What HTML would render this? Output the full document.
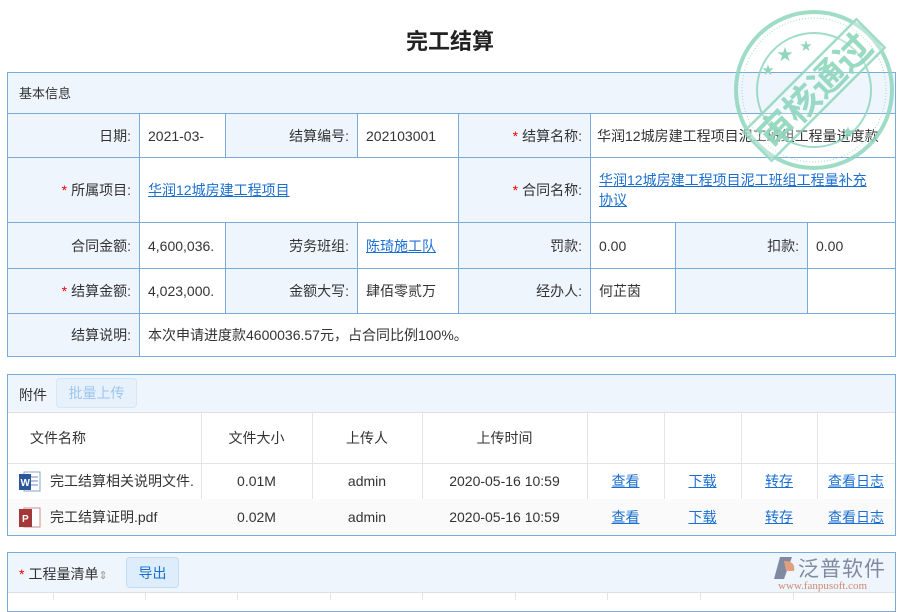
<!DOCTYPE html>
<html><head><meta charset="utf-8"><style>
*{margin:0;padding:0;box-sizing:border-box}
body{width:900px;height:600px;overflow:hidden;background:#fff;font-family:"Liberation Sans","Noto Sans CJK SC",sans-serif;font-size:14px;color:#333;position:relative}
.a{position:absolute}
.c{position:absolute;border:1px solid #7aaad8;display:flex;align-items:center;padding:0 8px}
.l{background:#eef5fd;justify-content:flex-end}
.v{background:#fff}
.r{color:#e00;margin-right:4px}
a{color:#1a6fd1;text-decoration:underline}
.g{position:absolute;border-right:1px solid #e4e4e4;border-bottom:1px solid #e4e4e4;display:flex;align-items:center;justify-content:center}
</style></head><body>
<div class="a" style="left:0;top:24px;width:900px;text-align:center;font-size:22px;font-weight:bold;color:#222">完工结算</div>

<div class="a" style="left:7px;top:72px;width:889px;height:285px;border:1px solid #7aaad8;background:#eef5fd"></div>
<div class="a" style="left:19px;top:83px;font-size:13px">基本信息</div>
<div class="c l" style="left:7px;top:113px;width:133px;height:45px">日期:</div>
<div class="c v" style="left:139px;top:113px;width:87px;height:45px">2021-03-</div>
<div class="c l" style="left:225px;top:113px;width:133px;height:45px">结算编号:</div>
<div class="c v" style="left:357px;top:113px;width:102px;height:45px">202103001</div>
<div class="c l" style="left:458px;top:113px;width:133px;height:45px"><span class="r">*</span>结算名称:</div>
<div class="c v" style="left:590px;top:113px;width:306px;height:45px;white-space:nowrap;padding-left:6px">华润12城房建工程项目泥工班组工程量进度款</div>
<div class="c l" style="left:7px;top:157px;width:133px;height:66px"><span class="r">*</span>所属项目:</div>
<div class="c v" style="left:139px;top:157px;width:320px;height:66px"><a>华润12城房建工程项目</a></div>
<div class="c l" style="left:458px;top:157px;width:133px;height:66px"><span class="r">*</span>合同名称:</div>
<div class="c v" style="left:590px;top:157px;width:306px;height:66px;line-height:20px;padding-right:20px"><a>华润12城房建工程项目泥工班组工程量补充协议</a></div>
<div class="c l" style="left:7px;top:222px;width:133px;height:47px">合同金额:</div>
<div class="c v" style="left:139px;top:222px;width:87px;height:47px">4,600,036.</div>
<div class="c l" style="left:225px;top:222px;width:133px;height:47px">劳务班组:</div>
<div class="c v" style="left:357px;top:222px;width:102px;height:47px"><a>陈琦施工队</a></div>
<div class="c l" style="left:458px;top:222px;width:133px;height:47px">罚款:</div>
<div class="c v" style="left:590px;top:222px;width:86px;height:47px">0.00</div>
<div class="c l" style="left:675px;top:222px;width:133px;height:47px">扣款:</div>
<div class="c v" style="left:807px;top:222px;width:89px;height:47px">0.00</div>
<div class="c l" style="left:7px;top:268px;width:133px;height:46px"><span class="r">*</span>结算金额:</div>
<div class="c v" style="left:139px;top:268px;width:87px;height:46px">4,023,000.</div>
<div class="c l" style="left:225px;top:268px;width:133px;height:46px">金额大写:</div>
<div class="c v" style="left:357px;top:268px;width:102px;height:46px">肆佰零贰万</div>
<div class="c l" style="left:458px;top:268px;width:133px;height:46px">经办人:</div>
<div class="c v" style="left:590px;top:268px;width:86px;height:46px">何芷茵</div>
<div class="c l" style="left:675px;top:268px;width:133px;height:46px"></div>
<div class="c v" style="left:807px;top:268px;width:89px;height:46px"></div>
<div class="c l" style="left:7px;top:313px;width:133px;height:44px">结算说明:</div>
<div class="c v" style="left:139px;top:313px;width:757px;height:44px">本次申请进度款4600036.57元，占合同比例100%。</div>

<svg class="a" style="left:732px;top:8px" width="164" height="164" viewBox="0 0 164 164">
<g fill="none" stroke="#8fd6bd" opacity="0.85">
<circle cx="82" cy="82" r="78" stroke-width="4"/>
<circle cx="82" cy="82" r="72" stroke-width="1" stroke-dasharray="1 2"/>
<circle cx="82" cy="82" r="57" stroke-width="2"/>
<g transform="rotate(-45 82 82)"><rect x="2" y="62" width="160" height="40" fill="#fff" fill-opacity="0.3" stroke-width="2.5"/></g>
</g>
<g fill="#8fd6bd" font-size="12"><text x="30" y="66">★</text><text x="45" y="52" font-size="16">★</text><text x="68" y="42">★</text><text x="110" y="128">★</text></g>
<text x="82" y="96" text-anchor="middle" font-size="36" font-weight="bold" fill="#8fd6bd" opacity="0.9" transform="rotate(-45 82 82)" font-family="Noto Sans CJK SC,sans-serif">审核通过</text>
</svg>

<div class="a" style="left:7px;top:374px;width:889px;height:162px;border:1px solid #7aaad8;background:#fff"></div>
<div class="a" style="left:8px;top:375px;width:887px;height:38px;background:#eef5fd;border-bottom:1px solid #e0e0e0"></div>
<div class="a" style="left:19px;top:385px">附件</div>
<div class="a" style="left:56px;top:378px;width:81px;height:30px;border:1px solid #d5e6f5;border-radius:4px;background:#e6f1fc;color:#9cc5ef;display:flex;align-items:center;justify-content:center">批量上传</div>
<div class="g" style="left:8px;top:413px;width:194px;height:51px;justify-content:flex-start;padding-left:22px">文件名称</div>
<div class="g" style="left:201px;top:413px;width:112px;height:51px">文件大小</div>
<div class="g" style="left:312px;top:413px;width:111px;height:51px">上传人</div>
<div class="g" style="left:422px;top:413px;width:166px;height:51px">上传时间</div>
<div class="g" style="left:587px;top:413px;width:78px;height:51px"></div>
<div class="g" style="left:664px;top:413px;width:78px;height:51px"></div>
<div class="g" style="left:741px;top:413px;width:77px;height:51px"></div>
<div class="g" style="left:817px;top:413px;width:78px;height:51px;border-right:none"></div>

<div class="g" style="left:8px;top:463px;width:194px;height:37px;justify-content:flex-start;padding-left:10px;white-space:nowrap;overflow:hidden"><svg width="24" height="24" style="margin-right:8px;flex:none"><rect x="6" y="3" width="16" height="19" fill="#fff" stroke="#8aa0c8"/><line x1="12" y1="8" x2="20" y2="8" stroke="#6a8ac0"/><line x1="12" y1="12" x2="20" y2="12" stroke="#6a8ac0"/><line x1="12" y1="16" x2="20" y2="16" stroke="#6a8ac0"/><rect x="1" y="5" width="12" height="16" fill="#2b579a"/><text x="2.5" y="17" font-size="10" fill="#fff" font-weight="bold">W</text></svg>完工结算相关说明文件.</div>
<div class="g" style="left:201px;top:463px;width:112px;height:37px">0.01M</div>
<div class="g" style="left:312px;top:463px;width:111px;height:37px">admin</div>
<div class="g" style="left:422px;top:463px;width:166px;height:37px">2020-05-16 10:59</div>
<div class="g" style="left:587px;top:463px;width:78px;height:37px"><a>查看</a></div>
<div class="g" style="left:664px;top:463px;width:78px;height:37px"><a>下载</a></div>
<div class="g" style="left:741px;top:463px;width:77px;height:37px"><a>转存</a></div>
<div class="g" style="left:817px;top:463px;width:78px;height:37px;border-right:none"><a>查看日志</a></div>

<div class="g" style="left:8px;top:499px;width:194px;height:36px;background:#fafafa;justify-content:flex-start;padding-left:10px;border-bottom:none"><svg width="24" height="24" style="margin-right:8px"><rect x="6" y="3" width="16" height="19" fill="#fff" stroke="#c89090"/><rect x="1" y="4" width="13" height="18" fill="#a4373a"/><text x="4" y="17" font-size="10" fill="#fff" font-weight="bold">P</text></svg>完工结算证明.pdf</div>
<div class="g" style="left:201px;top:499px;width:112px;height:36px;background:#fafafa;border-bottom:none">0.02M</div>
<div class="g" style="left:312px;top:499px;width:111px;height:36px;background:#fafafa;border-bottom:none">admin</div>
<div class="g" style="left:422px;top:499px;width:166px;height:36px;background:#fafafa;border-bottom:none">2020-05-16 10:59</div>
<div class="g" style="left:587px;top:499px;width:78px;height:36px;background:#fafafa;border-bottom:none"><a>查看</a></div>
<div class="g" style="left:664px;top:499px;width:78px;height:36px;background:#fafafa;border-bottom:none"><a>下载</a></div>
<div class="g" style="left:741px;top:499px;width:77px;height:36px;background:#fafafa;border-bottom:none"><a>转存</a></div>
<div class="g" style="left:817px;top:499px;width:78px;height:36px;background:#fafafa;border:none"><a>查看日志</a></div>

<div class="a" style="left:7px;top:552px;width:889px;height:60px;border:1px solid #7aaad8;background:#fff"></div>
<div class="a" style="left:8px;top:553px;width:887px;height:40px;background:#eef5fd;border-bottom:1px solid #e0e0e0"></div>
<div class="a" style="left:19px;top:564px"><span class="r">*</span>工程量清单<span style="color:#999;font-size:11px">⇕</span></div>
<div class="a" style="left:126px;top:557px;width:53px;height:31px;border:1px solid #c5dbf0;border-radius:4px;background:#deedfb;color:#1a6fd1;display:flex;align-items:center;justify-content:center">导出</div>
<div class="a" style="left:53px;top:593px;width:1px;height:7px;background:#e4e4e4"></div>
<div class="a" style="left:145px;top:593px;width:1px;height:7px;background:#e4e4e4"></div>
<div class="a" style="left:237px;top:593px;width:1px;height:7px;background:#e4e4e4"></div>
<div class="a" style="left:330px;top:593px;width:1px;height:7px;background:#e4e4e4"></div>
<div class="a" style="left:422px;top:593px;width:1px;height:7px;background:#e4e4e4"></div>
<div class="a" style="left:515px;top:593px;width:1px;height:7px;background:#e4e4e4"></div>
<div class="a" style="left:607px;top:593px;width:1px;height:7px;background:#e4e4e4"></div>
<div class="a" style="left:700px;top:593px;width:1px;height:7px;background:#e4e4e4"></div>
<div class="a" style="left:793px;top:593px;width:1px;height:7px;background:#e4e4e4"></div>
<svg class="a" style="left:770px;top:555px" width="28" height="26"><path d="M10 2 L22 2 L14 24 L4 24 Z" fill="#7f8aa0"/><path d="M14 6 Q26 6 24 16 L16 16 Z" fill="#e0a080"/></svg>
<div class="a" style="left:798px;top:553px;font-size:21px;color:#7f8aa0;letter-spacing:1px">泛普软件</div>
<div class="a" style="left:778px;top:580px;font-size:11px;color:#d08a70;font-family:'Liberation Serif',serif">www.fanpusoft.com</div>
</body></html>
